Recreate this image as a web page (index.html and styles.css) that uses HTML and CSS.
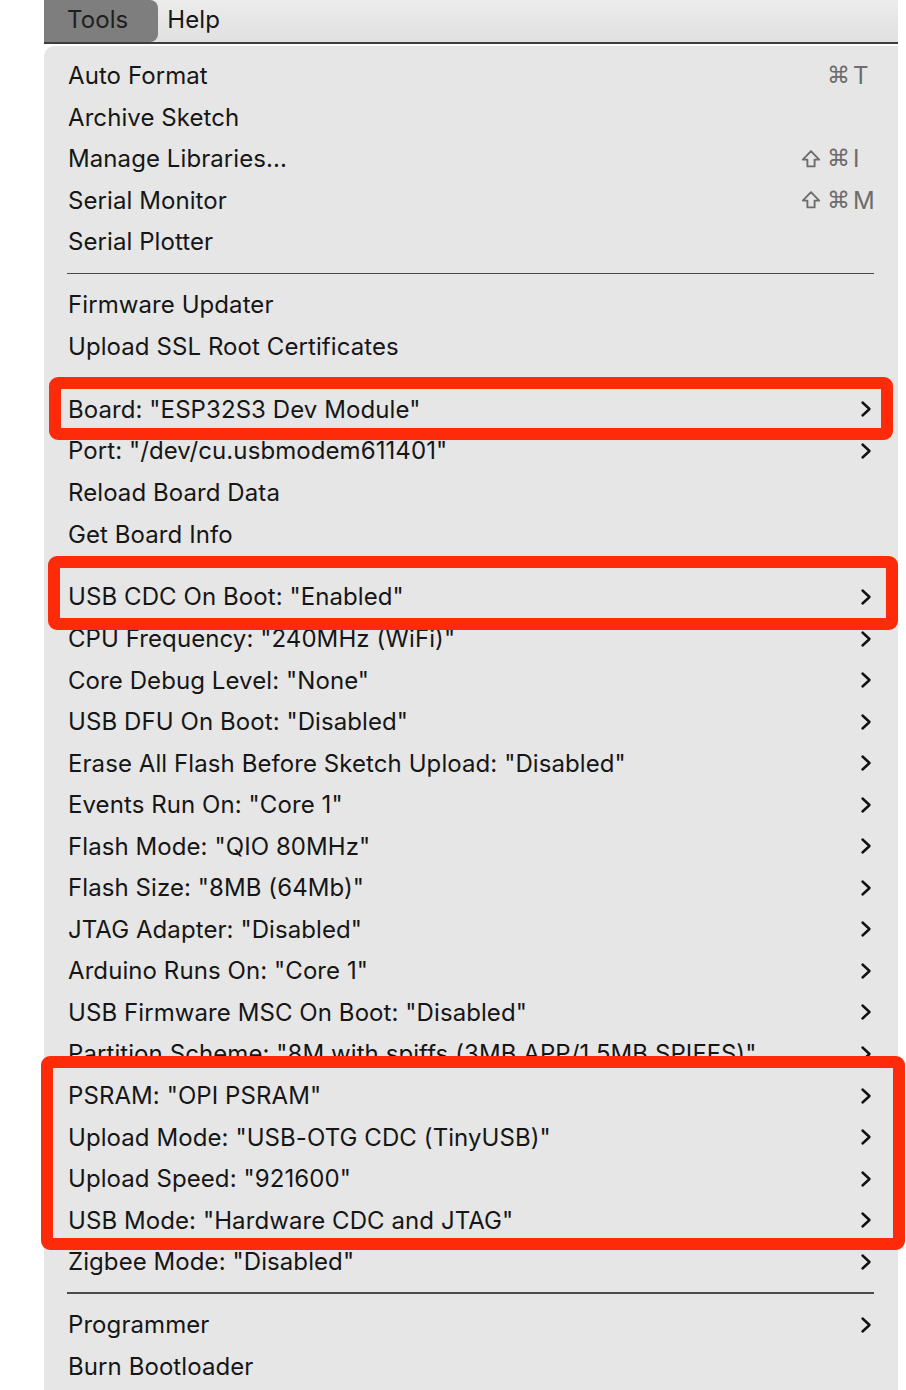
FILE: index.html
```html
<!DOCTYPE html>
<html>
<head>
<meta charset="utf-8">
<link rel="stylesheet" href="styles.css">
</head>
<body>
<div class="page">
  <div class="menubar">
    <span class="mb-item active">Tools</span>
    <span class="mb-item">Help</span>
  </div>
  <div class="panel">
    <div class="row"><span>Auto Format</span><span class="sc"><span class="cmd">⌘</span><span class="key">T</span></span></div>
    <div class="row"><span>Archive Sketch</span></div>
    <div class="row"><span>Manage Libraries...</span><span class="sc"><svg class="shift" width="20" height="20" viewBox="0 0 20 20"><path d="M10 2.2 L18.2 10.6 H13.6 V17.4 H6.4 V10.6 H1.8 Z" fill="none" stroke="#6c6c6c" stroke-width="1.9" stroke-linejoin="round"/></svg><span class="cmd">⌘</span><span class="key">I</span></span></div>
    <div class="row"><span>Serial Monitor</span><span class="sc"><svg class="shift" width="20" height="20" viewBox="0 0 20 20"><path d="M10 2.2 L18.2 10.6 H13.6 V17.4 H6.4 V10.6 H1.8 Z" fill="none" stroke="#6c6c6c" stroke-width="1.9" stroke-linejoin="round"/></svg><span class="cmd">⌘</span><span class="key">M</span></span></div>
    <div class="row"><span>Serial Plotter</span></div>
    <div class="sep"></div>
    <div class="row"><span>Firmware Updater</span></div>
    <div class="row"><span>Upload SSL Root Certificates</span></div>
    <div class="sep"></div>
    <div class="row sub"><span>Board: "ESP32S3 Dev Module"</span></div>
    <div class="row sub"><span>Port: "/dev/cu.usbmodem611401"</span></div>
    <div class="row"><span>Reload Board Data</span></div>
    <div class="row"><span>Get Board Info</span></div>
    <div class="sep"></div>
    <div class="row sub"><span>USB CDC On Boot: "Enabled"</span></div>
    <div class="row sub"><span>CPU Frequency: "240MHz (WiFi)"</span></div>
    <div class="row sub"><span>Core Debug Level: "None"</span></div>
    <div class="row sub"><span>USB DFU On Boot: "Disabled"</span></div>
    <div class="row sub"><span>Erase All Flash Before Sketch Upload: "Disabled"</span></div>
    <div class="row sub"><span>Events Run On: "Core 1"</span></div>
    <div class="row sub"><span>Flash Mode: "QIO 80MHz"</span></div>
    <div class="row sub"><span>Flash Size: "8MB (64Mb)"</span></div>
    <div class="row sub"><span>JTAG Adapter: "Disabled"</span></div>
    <div class="row sub"><span>Arduino Runs On: "Core 1"</span></div>
    <div class="row sub"><span>USB Firmware MSC On Boot: "Disabled"</span></div>
    <div class="row sub"><span>Partition Scheme: "8M with spiffs (3MB APP/1.5MB SPIFFS)"</span></div>
    <div class="row sub"><span>PSRAM: "OPI PSRAM"</span></div>
    <div class="row sub"><span>Upload Mode: "USB-OTG CDC (TinyUSB)"</span></div>
    <div class="row sub"><span>Upload Speed: "921600"</span></div>
    <div class="row sub"><span>USB Mode: "Hardware CDC and JTAG"</span></div>
    <div class="row sub"><span>Zigbee Mode: "Disabled"</span></div>
    <div class="sep"></div>
    <div class="row sub"><span>Programmer</span></div>
    <div class="row"><span>Burn Bootloader</span></div>
  </div>
  <div class="hl hl-board"></div>
  <div class="hl hl-cdc"></div>
  <div class="hl hl-group"></div>
</div>
<script>
document.querySelectorAll('.row.sub').forEach(function (r) {
  r.insertAdjacentHTML('beforeend', '<svg class="chev" width="12" height="18" viewBox="0 0 12 18"><path d="M2.5 2.5 L9.5 9 L2.5 15.5" fill="none" stroke="#111" stroke-width="2.4" stroke-linecap="round" stroke-linejoin="round"/></svg>');
});
</script>
</body>
</html>
```
FILE: styles.css
```css
html, body {
  margin: 0;
  padding: 0;
  background: #ffffff;
}
.page {
  position: relative;
  width: 906px;
  height: 1390px;
  overflow: hidden;
  font-family: "Inter", "Liberation Sans", sans-serif;
  color: #161616;
}
.menubar {
  margin-left: 44px;
  width: 854px;
  height: 42px;
  background: linear-gradient(#ececec, #e0e0e0);
  border-bottom: 2px solid #3c3c3c;
  display: flex;
  align-items: stretch;
  font-size: 24px;
  letter-spacing: 0.08px;
}
.mb-item {
  display: flex;
  align-items: center;
  padding: 0 10px 3px 9px;
}
.mb-item.active {
  background: #7e7e7e;
  padding: 0 30px 3px 23px;
  border-radius: 0 8px 8px 0;
  color: #1e1e1e;
}
.panel {
  margin-left: 44px;
  margin-top: 2px;
  width: 854px;
  min-height: 1400px;
  background: #e6e6e6;
  border-top-left-radius: 10px;
  padding-top: 9px;
  box-sizing: border-box;
  font-size: 24px;
  letter-spacing: 0.08px;
}
.row {
  height: 41.55px;
  display: flex;
  align-items: center;
  justify-content: space-between;
  padding: 0 26px 0 24px;
  white-space: nowrap;
}
.sc {
  color: #6c6c6c;
  display: flex;
  align-items: center;
}
.shift {
  display: block;
  flex: none;
  margin-right: 6px;
}
.cmd {
  width: 20px;
  margin-right: 6px;
  text-align: center;
  font-family: "DejaVu Sans", "Liberation Sans", sans-serif;
  font-size: 23px;
  line-height: 1;
}
.key {
  width: 19px;
  text-align: left;
  overflow: visible;
}
.chev {
  display: block;
  flex: none;
}
.sep {
  height: 21.4px;
  display: flex;
  align-items: center;
  padding: 0 24px 0 23px;
}
.sep::before {
  content: "";
  display: block;
  width: 100%;
  height: 1.5px;
  background: #4a4a4a;
}
.hl {
  position: absolute;
  border: 12px solid #fe2b0b;
  border-radius: 9px;
  box-sizing: border-box;
}
.hl-board {
  left: 49px;
  top: 377px;
  width: 844px;
  height: 63px;
}
.hl-cdc {
  left: 48px;
  top: 556px;
  width: 850px;
  height: 74px;
}
.hl-group {
  left: 41px;
  top: 1056px;
  width: 864px;
  height: 194px;
}
```
